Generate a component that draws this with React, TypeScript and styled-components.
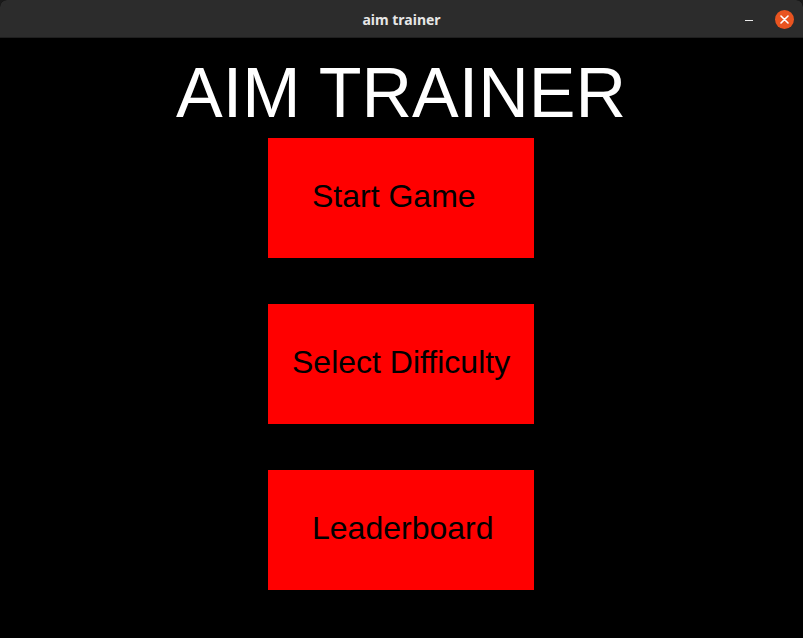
import React from "react";
import styled, { createGlobalStyle } from "styled-components";

const GlobalStyle = createGlobalStyle`
  html, body {
    margin: 0;
    padding: 0;
    background: #1a1a1a;
  }
  #root {
    width: 803px;
    height: 638px;
  }
`;

const Window = styled.div`
  width: 803px;
  height: 638px;
  display: flex;
  flex-direction: column;
  background: #000000;
  border-radius: 7px 7px 0 0;
  overflow: hidden;
`;

const TitleBar = styled.div`
  height: 37px;
  flex-shrink: 0;
  background: #2c2c2c;
  border-bottom: 1px solid #1f1f1f;
  position: relative;
  display: flex;
  align-items: center;
  justify-content: center;
`;

const WindowTitle = styled.div`
  font-family: "Noto Sans", "DejaVu Sans", sans-serif;
  font-weight: 700;
  font-size: 14px;
  color: #e6e6e6;
  margin-top: 1px;
`;

const Controls = styled.div`
  position: absolute;
  right: 9px;
  top: 0;
  height: 37px;
  display: flex;
  align-items: center;
  gap: 22px;
`;

const Minimize = styled.div`
  width: 8px;
  height: 1px;
  background: #eaeaea;
  margin-top: 4px;
`;

const CloseButton = styled.div`
  width: 19px;
  height: 19px;
  border-radius: 50%;
  background: #e95420;
  display: flex;
  align-items: center;
  justify-content: center;
  margin-top: 1px;
`;

const Content = styled.main`
  flex: 1;
  display: flex;
  flex-direction: column;
  align-items: center;
  padding-right: 1px;
`;

const Heading = styled.h1`
  margin: 15px 0 5px;
  font-family: "Liberation Sans", Arial, sans-serif;
  font-weight: 400;
  font-size: 70px;
  line-height: 80px;
  color: #ffffff;
`;

const Menu = styled.nav`
  display: flex;
  flex-direction: column;
  gap: 46px;
`;

const MenuButton = styled.button<{ $indent: number }>`
  width: 266px;
  height: 120px;
  border: none;
  background: #ff0000;
  color: #000000;
  font-family: "Liberation Sans", Arial, sans-serif;
  font-size: 32px;
  line-height: 37px;
  display: flex;
  align-items: center;
  justify-content: flex-start;
  padding: 0 0 3px ${(p) => p.$indent}px;
  cursor: pointer;
`;

const items = [
  { label: "Start Game", indent: 44 },
  { label: "Select Difficulty", indent: 24 },
  { label: "Leaderboard", indent: 44 },
];

export default function App() {
  return (
    <>
      <GlobalStyle />
      <Window>
        <TitleBar>
          <WindowTitle>aim trainer</WindowTitle>
          <Controls>
            <Minimize />
            <CloseButton>
              <svg width="9" height="9" viewBox="0 0 9 9">
                <path
                  d="M1 1 L8 8 M8 1 L1 8"
                  stroke="#ffffff"
                  strokeWidth="1.6"
                  strokeLinecap="round"
                />
              </svg>
            </CloseButton>
          </Controls>
        </TitleBar>
        <Content>
          <Heading>AIM TRAINER</Heading>
          <Menu>
            {items.map((item) => (
              <MenuButton key={item.label} $indent={item.indent}>
                {item.label}
              </MenuButton>
            ))}
          </Menu>
        </Content>
      </Window>
    </>
  );
}
